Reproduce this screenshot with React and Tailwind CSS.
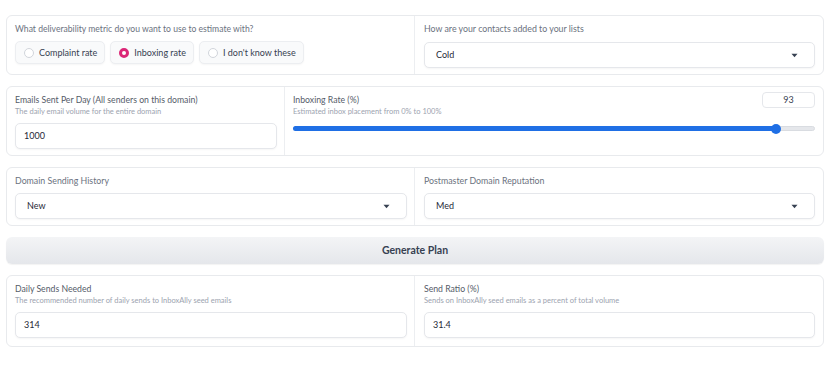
import React from "react";

const font = { fontFamily: "Lato, 'Liberation Sans', sans-serif" };

function Caret() {
  return (
    <svg width="7" height="5" viewBox="0 0 7 5" className="shrink-0">
      <path d="M0.5 0.8 L6.5 0.8 L3.5 4.2 Z" fill="#374151" />
    </svg>
  );
}

function Select({ value }) {
  return (
    <div className="flex h-[26px] items-center justify-between rounded-[5px] border border-[#e5e7eb] bg-white pl-[11px] pr-[16px] text-[9px] text-[#1f2937] shadow-[0_1px_2px_rgba(0,0,0,0.04)]">
      <span>{value}</span>
      <Caret />
    </div>
  );
}

function TextBox({ value }) {
  return (
    <div className="flex h-[26px] items-center rounded-[5px] border border-[#e5e7eb] bg-white pl-[8px] text-[9px] text-[#1f2937] shadow-[0_1px_2px_rgba(0,0,0,0.04)]">
      {value}
    </div>
  );
}

function Radio({ label, checked }) {
  return (
    <div className="flex h-[23px] items-center gap-[5px] rounded-[5px] border border-[#eceef1] bg-[#f9fafb] pl-[8px] pr-[7px] text-[9px] text-[#374151] shadow-[0_1px_2px_rgba(0,0,0,0.04)]">
      {checked ? (
        <span className="h-[10px] w-[10px] rounded-full border-[3px] border-[#db2777] bg-white" />
      ) : (
        <span className="h-[10px] w-[10px] rounded-full border border-[#d1d5db] bg-white" />
      )}
      <span>{label}</span>
    </div>
  );
}

export default function App() {
  return (
    <div className="min-h-[373px] w-[839px] bg-white" style={font}>
      <div className="flex w-[824px] flex-col gap-[11px] pl-[6px] pt-[15px]">
        {/* Row 1 */}
        <div className="flex h-[60px] rounded-[6px] border border-[#e8eaed] bg-white">
          <div className="flex w-[408px] flex-col border-r border-[#eceef1] pl-[8px] pt-[7px]">
            <div className="text-[8.6px] leading-[12px] text-[#6b7280]">
              What deliverability metric do you want to use to estimate with?
            </div>
            <div className="mt-[6px] flex gap-[5px]">
              <Radio label="Complaint rate" />
              <Radio label="Inboxing rate" checked />
              <Radio label="I don't know these" />
            </div>
          </div>
          <div className="flex flex-1 flex-col pl-[9px] pr-[8px] pt-[7px]">
            <div className="text-[8.8px] leading-[12px] text-[#6b7280]">
              How are your contacts added to your lists
            </div>
            <div className="mt-[7px]">
              <Select value="Cold" />
            </div>
          </div>
        </div>

        {/* Row 2 */}
        <div className="flex h-[70px] rounded-[6px] border border-[#e8eaed] bg-white">
          <div className="flex w-[278px] flex-col border-r border-[#eceef1] pl-[8px] pr-[7px] pt-[6px]">
            <div className="text-[8.7px] leading-[13px] text-[#555c69]">
              Emails Sent Per Day (All senders on this domain)
            </div>
            <div className="mt-[1px] text-[7.5px] leading-[10px] text-[#9ca3af]">
              The daily email volume for the entire domain
            </div>
            <div className="mt-[6px]">
              <TextBox value="1000" />
            </div>
          </div>
          <div className="flex flex-1 flex-col pl-[8px] pr-[8px] pt-[5px]">
            <div className="flex items-start justify-between">
              <div>
                <div className="mt-[1px] text-[8.7px] leading-[13px] text-[#555c69]">Inboxing Rate (%)</div>
                <div className="mt-[1px] text-[7.5px] leading-[10px] text-[#9ca3af]">
                  Estimated inbox placement from 0% to 100%
                </div>
              </div>
              <div className="flex h-[16px] w-[53px] items-center justify-center rounded-[4px] border border-[#e5e7eb] bg-white text-[9px] text-[#374151]">
                93
              </div>
            </div>
            <div className="relative mt-[9px] h-[5px] w-full rounded-full border border-[#d9dce1] bg-[#e5e7eb]">
              <div className="absolute left-[-1px] top-[-1px] h-[5px] rounded-full bg-[#1f6fe5]" style={{ width: "93%" }} />
              <div className="absolute top-[50%] h-[10px] w-[10px] -translate-x-1/2 -translate-y-1/2 rounded-full bg-[#1f6fe5]" style={{ left: "92.6%" }} />
            </div>
          </div>
        </div>

        {/* Row 3 */}
        <div className="flex h-[59px] rounded-[6px] border border-[#e8eaed] bg-white">
          <div className="flex w-[408px] flex-col border-r border-[#eceef1] pl-[8px] pr-[7px] pt-[7px]">
            <div className="text-[8.8px] leading-[12px] text-[#6b7280]">Domain Sending History</div>
            <div className="mt-[6px]">
              <Select value="New" />
            </div>
          </div>
          <div className="flex flex-1 flex-col pl-[9px] pr-[8px] pt-[7px]">
            <div className="text-[8.8px] leading-[12px] text-[#6b7280]">Postmaster Domain Reputation</div>
            <div className="mt-[6px]">
              <Select value="Med" />
            </div>
          </div>
        </div>

        {/* Button */}
        <div className="flex h-[27px] items-center justify-center rounded-[6px] bg-gradient-to-b from-[#f3f4f6] to-[#e5e7eb] text-[10.5px] font-bold text-[#374151] shadow-[0_1px_1px_rgba(0,0,0,0.05)]">
          Generate Plan
        </div>

        {/* Row 4 */}
        <div className="flex h-[72px] rounded-[6px] border border-[#e8eaed] bg-white">
          <div className="flex w-[408px] flex-col border-r border-[#eceef1] pl-[8px] pr-[7px] pt-[6px]">
            <div className="text-[8.7px] leading-[13px] text-[#555c69]">Daily Sends Needed</div>
            <div className="mt-[1px] text-[7.5px] leading-[10px] text-[#9ca3af]">
              The recommended number of daily sends to InboxAlly seed emails
            </div>
            <div className="mt-[6px]">
              <TextBox value="314" />
            </div>
          </div>
          <div className="flex flex-1 flex-col pl-[9px] pr-[8px] pt-[6px]">
            <div className="text-[8.7px] leading-[13px] text-[#555c69]">Send Ratio (%)</div>
            <div className="mt-[1px] text-[7.5px] leading-[10px] text-[#9ca3af]">
              Sends on InboxAlly seed emails as a percent of total volume
            </div>
            <div className="mt-[6px]">
              <TextBox value="31.4" />
            </div>
          </div>
        </div>
      </div>
    </div>
  );
}
